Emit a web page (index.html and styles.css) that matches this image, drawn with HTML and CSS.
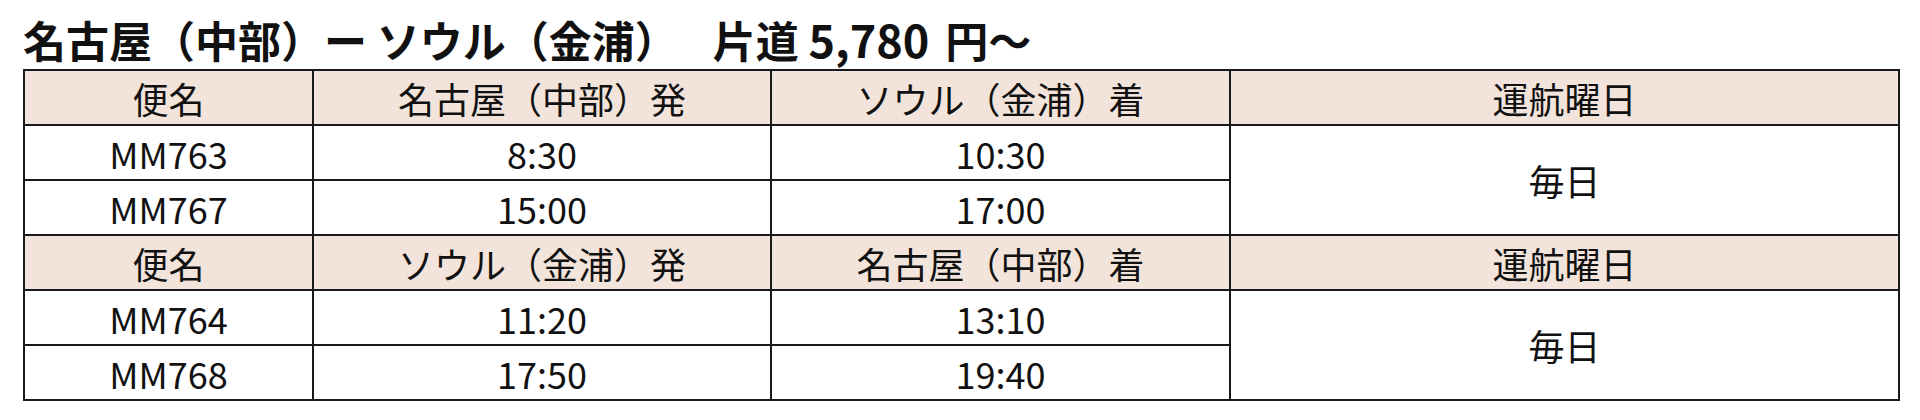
FILE: index.html
```html
<!DOCTYPE html>
<html lang="ja">
<head>
<meta charset="utf-8">
<title>名古屋（中部）ー ソウル（金浦）</title>
<link rel="stylesheet" href="styles.css">
</head>
<body>
<main class="page">
  <h1 class="title">名古屋（中部）ー ソウル（金浦）<span class="price">片道 <span class="amount">5,780</span><span class="yen">円〜</span></span></h1>
  <table class="timetable">
    <colgroup>
      <col class="c-flight">
      <col class="c-dep">
      <col class="c-arr">
      <col class="c-days">
    </colgroup>
    <tbody>
      <tr class="head">
        <td>便名</td>
        <td>名古屋（中部）発</td>
        <td>ソウル（金浦）着</td>
        <td>運航曜日</td>
      </tr>
      <tr>
        <td>MM763</td>
        <td>8:30</td>
        <td>10:30</td>
        <td rowspan="2">毎日</td>
      </tr>
      <tr>
        <td>MM767</td>
        <td>15:00</td>
        <td>17:00</td>
      </tr>
      <tr class="head">
        <td>便名</td>
        <td>ソウル（金浦）発</td>
        <td>名古屋（中部）着</td>
        <td>運航曜日</td>
      </tr>
      <tr>
        <td>MM764</td>
        <td>11:20</td>
        <td>13:10</td>
        <td rowspan="2">毎日</td>
      </tr>
      <tr>
        <td>MM768</td>
        <td>17:50</td>
        <td>19:40</td>
      </tr>
    </tbody>
  </table>
</main>
</body>
</html>
```
FILE: styles.css
```css
html, body {
  margin: 0;
  padding: 0;
  background: #ffffff;
}

body {
  font-family: "Noto Sans CJK JP", "Noto Sans", sans-serif;
  color: #111111;
}

.page {
  padding: 16px 0 0 23px;
}

.title {
  margin: 0 0 7px 0;
  font-size: 43px;
  line-height: 46px;
  font-weight: 700;
  color: #111111;
  white-space: nowrap;
}

.price {
  margin-left: 35px;
}

.amount {
  font-size: 45px;
}

.yen {
  margin-left: 16px;
}

.timetable {
  border-collapse: collapse;
  width: 1875px;
  table-layout: fixed;
}

.c-flight { width: 289px; }
.c-dep { width: 458px; }
.c-arr { width: 459px; }
.c-days { width: 669px; }

.timetable td {
  border: 2px solid #1a1a1a;
  height: 53px;
  padding: 0;
  text-align: center;
  vertical-align: middle;
  font-size: 36px;
  line-height: 40px;
  color: #111111;
}

.timetable .head td {
  background: #f2e4da;
}
```
